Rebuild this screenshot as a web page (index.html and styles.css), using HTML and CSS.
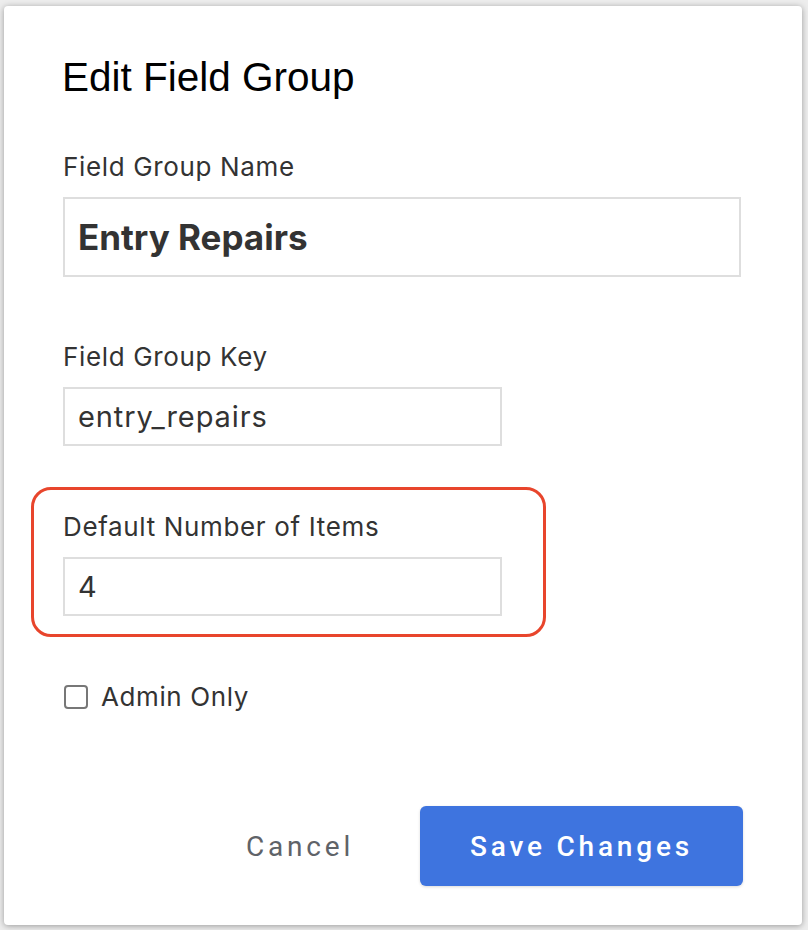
FILE: index.html
```html
<!DOCTYPE html>
<html>
<head>
<meta charset="utf-8">
<link rel="stylesheet" href="styles.css">
</head>
<body>
<div class="dialog">
  <h1 class="title">Edit Field Group</h1>
  <div class="field">
    <label class="label">Field Group Name</label>
    <div class="input input-lg">Entry Repairs</div>
  </div>
  <div class="field field-key">
    <label class="label">Field Group Key</label>
    <div class="input input-md">entry_repairs</div>
  </div>
  <div class="highlight">
    <label class="label">Default Number of Items</label>
    <div class="input input-md">4</div>
  </div>
  <div class="check-row">
    <span class="checkbox"></span>
    <span class="check-label">Admin Only</span>
  </div>
  <div class="actions">
    <button class="btn btn-cancel">Cancel</button>
    <button class="btn btn-save">Save Changes</button>
  </div>
</div>
</body>
</html>
```
FILE: styles.css
```css
html, body {
  margin: 0;
  padding: 0;
}
body {
  background: #ededed;
  padding: 6px 6px 5px 4px;
  font-family: Inter, "Noto Sans", sans-serif;
  color: #333;
}
.dialog {
  background: #fff;
  border-radius: 4px;
  box-shadow: 0 1px 6px rgba(0,0,0,0.35);
  height: 919px;
  box-sizing: border-box;
  padding: 47px 61px 39px 59px;
  display: flex;
  flex-direction: column;
}
.title {
  margin: 0 0 0 -1px;
  font-family: "Liberation Sans", Arial, sans-serif;
  font-weight: 400;
  font-size: 40.5px;
  line-height: 48px;
  color: #000;
}
.field {
  margin-top: 50px;
}
.field-key {
  margin-top: 64px;
}
.label {
  display: block;
  font-size: 26px;
  line-height: 32px;
  letter-spacing: 0.65px;
  color: #333;
  margin: 0 0 14px 0;
}
.input {
  border: 2px solid #dedede;
  box-sizing: border-box;
  color: #333;
  padding: 0 13px;
  display: flex;
  align-items: center;
}
.input-lg {
  height: 80px;
  font-size: 35px;
  font-weight: 700;
}
.input-md {
  width: 439px;
  height: 59px;
  font-size: 29px;
  letter-spacing: 0.9px;
}
.highlight {
  align-self: flex-start;
  margin: 41px 0 0 -32px;
  border: 3px solid #e8452c;
  border-radius: 20px;
  padding: 21px 41px 18px 29px;
}
.check-row {
  margin-top: 44px;
  display: flex;
  align-items: center;
  gap: 13px;
  height: 32px;
  padding-left: 1px;
}
.checkbox {
  width: 20px;
  height: 20px;
  border: 2px solid #777;
  border-radius: 4px;
}
.check-label {
  font-size: 26px;
  line-height: 32px;
  letter-spacing: 0.6px;
}
.actions {
  margin-top: auto;
  display: flex;
  justify-content: flex-end;
  align-items: center;
  margin-right: -2px;
}
.btn {
  font-family: Roboto, "Liberation Sans", sans-serif;
  font-size: 28px;
  letter-spacing: 3.8px;
  border: none;
  cursor: pointer;
}
.btn-cancel {
  background: transparent;
  color: #5f6368;
  font-weight: 400;
  padding: 0 66px 0 0;
}
.btn-save {
  background: #3e74df;
  color: #fff;
  font-weight: 500;
  width: 323px;
  height: 80px;
  border-radius: 6px;
  box-shadow: 0 1px 3px rgba(0,0,0,0.15);
}
```
